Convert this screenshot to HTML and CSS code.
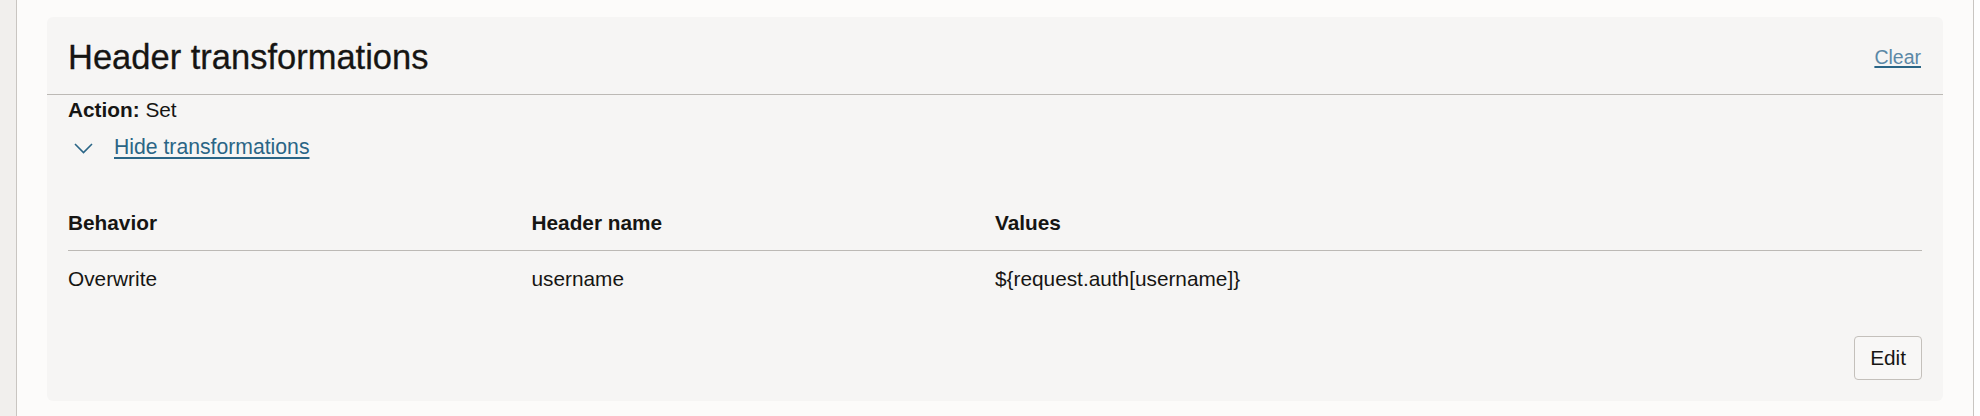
FILE: index.html
```html
<!DOCTYPE html>
<html lang="en">
<head>
<meta charset="utf-8">
<title>Header transformations</title>
<link rel="stylesheet" href="styles.css">
</head>
<body>
  <div class="side-left"></div>
  <main class="main">
    <section class="panel">
      <header class="panel-head">
        <h2 class="panel-title">Header transformations</h2>
        <a class="clear-link" href="#">Clear</a>
      </header>
      <div class="panel-body">
        <div class="action-line"><span class="label">Action:</span> Set</div>
        <div class="toggle-row">
          <span class="chev">
            <svg width="19" height="11" viewBox="0 0 19 11"><polyline points="1,1 9.5,9.5 18,1" fill="none" stroke="#2a6586" stroke-width="1.6"/></svg>
          </span>
          <a class="toggle-link" href="#">Hide transformations</a>
        </div>
        <table class="tx-table">
          <colgroup><col class="c1"><col class="c2"><col class="c3"></colgroup>
          <thead>
            <tr><th>Behavior</th><th>Header name</th><th>Values</th></tr>
          </thead>
          <tbody>
            <tr><td>Overwrite</td><td>username</td><td>${request.auth[username]}</td></tr>
          </tbody>
        </table>
        <div class="footer">
          <button class="btn" type="button">Edit</button>
        </div>
      </div>
    </section>
  </main>
  <div class="side-right"></div>
</body>
</html>
```
FILE: styles.css
```css
html, body {
  margin: 0;
  padding: 0;
}
body {
  display: flex;
  height: 416px;
  overflow: hidden;
  background: #fcfbfa;
  font-family: "Liberation Sans", Arial, Helvetica, sans-serif;
  color: #161513;
}
.side-left {
  width: 16px;
  flex: none;
  background: #f1efed;
  border-right: 1px solid #c9c5c1;
}
.side-right {
  width: 6px;
  flex: none;
  background: #fefefe;
  border-left: 1px solid #c9c5c1;
}
.main {
  flex: 1;
  padding: 17px 30px 0 30px;
}
.panel {
  background: #f6f5f4;
  border-radius: 6px;
}
.panel-head {
  display: flex;
  align-items: center;
  justify-content: space-between;
  padding: 20px 22px 17px 21px;
  border-bottom: 1px solid #bcb9b5;
}
.panel-title {
  margin: 0;
  font-size: 34.5px;
  line-height: 40px;
  font-weight: 400;
  color: #161513;
  -webkit-text-stroke: 0.3px #161513;
}
.clear-link {
  font-size: 19.5px;
  color: #5b88a6;
  text-decoration: underline;
  text-decoration-color: #2a6586;
  text-decoration-thickness: 2px;
  text-underline-offset: 2px;
}
.panel-body {
  padding: 3px 21px 21px 21px;
  font-size: 20.8px;
  line-height: 24px;
}
.label {
  font-weight: 700;
}
.toggle-row {
  display: flex;
  align-items: center;
  margin-top: 13px;
}
.chev {
  display: flex;
  justify-content: center;
  width: 30px;
  margin-right: 16px;
  padding-top: 2px;
}
.toggle-link {
  font-size: 21.2px;
  color: #2a6586;
  text-decoration: underline;
  text-decoration-thickness: 1.5px;
  text-underline-offset: 3px;
}
.tx-table {
  width: 100%;
  margin-top: 36px;
  border-collapse: separate;
  border-spacing: 0;
  table-layout: fixed;
}
.c1, .c2 { width: 25%; }
.c3 { width: 50%; }
.tx-table th {
  text-align: left;
  font-weight: 700;
  padding: 16px 0 15px 0;
  border-bottom: 1px solid #bcb9b5;
}
.tx-table td {
  padding: 16px 0 16px 0;
}
.footer {
  display: flex;
  justify-content: flex-end;
  margin-top: 29px;
}
.btn {
  box-sizing: border-box;
  height: 44px;
  padding: 0 15px;
  font-family: inherit;
  font-size: 20.8px;
  color: #161513;
  background: #f8f7f6;
  border: 1px solid #c4c0bb;
  border-radius: 4px;
}
```
